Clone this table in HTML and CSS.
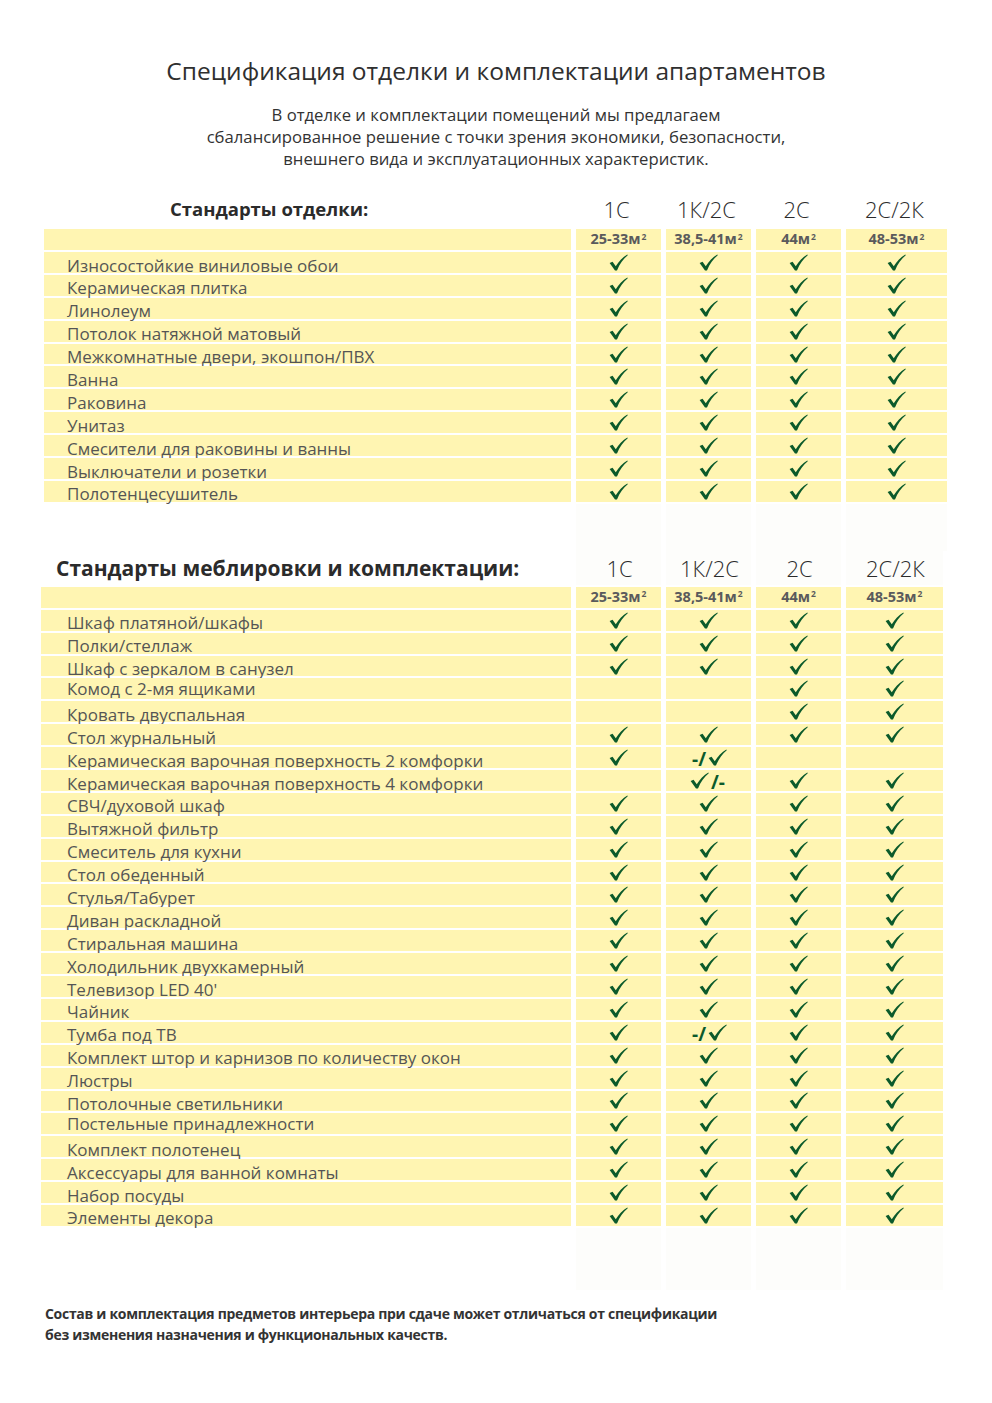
FILE: index.html
```html
<!DOCTYPE html>
<html lang="ru">
<head>
<meta charset="utf-8">
<title>Спецификация отделки и комплектации апартаментов</title>
<link rel="stylesheet" href="styles.css">
</head>
<body>
<svg class="defs" width="0" height="0" aria-hidden="true">
  <defs>
    <symbol id="ck" viewBox="0 0 20 18">
      <path d="M0.6 9.6 L3.7 8.1 L7.1 12.9 C10.4 7.4 14.4 3.1 19.4 0.4 L19.8 1.2 C15.1 4.9 11.2 10.4 8.4 17.4 L6.3 17.4 Z"/>
    </symbol>
  </defs>
</svg>
<main class="page">
  <h1 class="title">Спецификация отделки и комплектации апартаментов</h1>
  <p class="lead">В отделке и комплектации помещений мы предлагаем<br>сбалансированное решение с точки зрения экономики, безопасности,<br>внешнего вида и эксплуатационных характеристик.</p>

  <section class="spec spec-1">
    <div class="head-label h1l">Стандарты отделки:</div>
    <div class="head-col">1С</div>
    <div class="head-col">1К/2С</div>
    <div class="head-col">2С</div>
    <div class="head-col">2С/2К</div>

    <div class="cell label"></div>
    <div class="cell area">25-33м<sup>2</sup></div>
    <div class="cell area">38,5-41м<sup>2</sup></div>
    <div class="cell area">44м<sup>2</sup></div>
    <div class="cell area">48-53м<sup>2</sup></div>

    <div class="cell label">Износостойкие виниловые обои</div><div class="cell c"><svg class="chk"><use href="#ck"/></svg></div><div class="cell c"><svg class="chk"><use href="#ck"/></svg></div><div class="cell c"><svg class="chk"><use href="#ck"/></svg></div><div class="cell c"><svg class="chk"><use href="#ck"/></svg></div>
    <div class="cell label">Керамическая плитка</div><div class="cell c"><svg class="chk"><use href="#ck"/></svg></div><div class="cell c"><svg class="chk"><use href="#ck"/></svg></div><div class="cell c"><svg class="chk"><use href="#ck"/></svg></div><div class="cell c"><svg class="chk"><use href="#ck"/></svg></div>
    <div class="cell label">Линолеум</div><div class="cell c"><svg class="chk"><use href="#ck"/></svg></div><div class="cell c"><svg class="chk"><use href="#ck"/></svg></div><div class="cell c"><svg class="chk"><use href="#ck"/></svg></div><div class="cell c"><svg class="chk"><use href="#ck"/></svg></div>
    <div class="cell label">Потолок натяжной матовый</div><div class="cell c"><svg class="chk"><use href="#ck"/></svg></div><div class="cell c"><svg class="chk"><use href="#ck"/></svg></div><div class="cell c"><svg class="chk"><use href="#ck"/></svg></div><div class="cell c"><svg class="chk"><use href="#ck"/></svg></div>
    <div class="cell label">Межкомнатные двери, экошпон/ПВХ</div><div class="cell c"><svg class="chk"><use href="#ck"/></svg></div><div class="cell c"><svg class="chk"><use href="#ck"/></svg></div><div class="cell c"><svg class="chk"><use href="#ck"/></svg></div><div class="cell c"><svg class="chk"><use href="#ck"/></svg></div>
    <div class="cell label">Ванна</div><div class="cell c"><svg class="chk"><use href="#ck"/></svg></div><div class="cell c"><svg class="chk"><use href="#ck"/></svg></div><div class="cell c"><svg class="chk"><use href="#ck"/></svg></div><div class="cell c"><svg class="chk"><use href="#ck"/></svg></div>
    <div class="cell label">Раковина</div><div class="cell c"><svg class="chk"><use href="#ck"/></svg></div><div class="cell c"><svg class="chk"><use href="#ck"/></svg></div><div class="cell c"><svg class="chk"><use href="#ck"/></svg></div><div class="cell c"><svg class="chk"><use href="#ck"/></svg></div>
    <div class="cell label">Унитаз</div><div class="cell c"><svg class="chk"><use href="#ck"/></svg></div><div class="cell c"><svg class="chk"><use href="#ck"/></svg></div><div class="cell c"><svg class="chk"><use href="#ck"/></svg></div><div class="cell c"><svg class="chk"><use href="#ck"/></svg></div>
    <div class="cell label">Смесители для раковины и ванны</div><div class="cell c"><svg class="chk"><use href="#ck"/></svg></div><div class="cell c"><svg class="chk"><use href="#ck"/></svg></div><div class="cell c"><svg class="chk"><use href="#ck"/></svg></div><div class="cell c"><svg class="chk"><use href="#ck"/></svg></div>
    <div class="cell label">Выключатели и розетки</div><div class="cell c"><svg class="chk"><use href="#ck"/></svg></div><div class="cell c"><svg class="chk"><use href="#ck"/></svg></div><div class="cell c"><svg class="chk"><use href="#ck"/></svg></div><div class="cell c"><svg class="chk"><use href="#ck"/></svg></div>
    <div class="cell label">Полотенцесушитель</div><div class="cell c"><svg class="chk"><use href="#ck"/></svg></div><div class="cell c"><svg class="chk"><use href="#ck"/></svg></div><div class="cell c"><svg class="chk"><use href="#ck"/></svg></div><div class="cell c"><svg class="chk"><use href="#ck"/></svg></div>

    <div class="gap-cell"></div><div class="gap-cell faint"></div><div class="gap-cell faint"></div><div class="gap-cell faint"></div><div class="gap-cell faint"></div>
  </section>

  <section class="spec spec-2">
    <div class="head-label h2l">Стандарты меблировки и комплектации:</div>
    <div class="head-col faint">1С</div>
    <div class="head-col faint">1К/2С</div>
    <div class="head-col faint">2С</div>
    <div class="head-col faint">2С/2К</div>

    <div class="cell label"></div>
    <div class="cell area">25-33м<sup>2</sup></div>
    <div class="cell area">38,5-41м<sup>2</sup></div>
    <div class="cell area">44м<sup>2</sup></div>
    <div class="cell area">48-53м<sup>2</sup></div>

    <div class="cell label">Шкаф платяной/шкафы</div><div class="cell c"><svg class="chk"><use href="#ck"/></svg></div><div class="cell c"><svg class="chk"><use href="#ck"/></svg></div><div class="cell c"><svg class="chk"><use href="#ck"/></svg></div><div class="cell c"><svg class="chk"><use href="#ck"/></svg></div>
    <div class="cell label">Полки/стеллаж</div><div class="cell c"><svg class="chk"><use href="#ck"/></svg></div><div class="cell c"><svg class="chk"><use href="#ck"/></svg></div><div class="cell c"><svg class="chk"><use href="#ck"/></svg></div><div class="cell c"><svg class="chk"><use href="#ck"/></svg></div>
    <div class="cell label">Шкаф с зеркалом в санузел</div><div class="cell c"><svg class="chk"><use href="#ck"/></svg></div><div class="cell c"><svg class="chk"><use href="#ck"/></svg></div><div class="cell c"><svg class="chk"><use href="#ck"/></svg></div><div class="cell c"><svg class="chk"><use href="#ck"/></svg></div>
    <div class="cell label up">Комод с 2-мя ящиками</div><div class="cell c"></div><div class="cell c"></div><div class="cell c"><svg class="chk"><use href="#ck"/></svg></div><div class="cell c"><svg class="chk"><use href="#ck"/></svg></div>
    <div class="cell label">Кровать двуспальная</div><div class="cell c"></div><div class="cell c"></div><div class="cell c"><svg class="chk"><use href="#ck"/></svg></div><div class="cell c"><svg class="chk"><use href="#ck"/></svg></div>
    <div class="cell label">Стол журнальный</div><div class="cell c"><svg class="chk"><use href="#ck"/></svg></div><div class="cell c"><svg class="chk"><use href="#ck"/></svg></div><div class="cell c"><svg class="chk"><use href="#ck"/></svg></div><div class="cell c"><svg class="chk"><use href="#ck"/></svg></div>
    <div class="cell label">Керамическая варочная поверхность 2 комфорки</div><div class="cell c"><svg class="chk"><use href="#ck"/></svg></div><div class="cell c"><span class="mix">-/</span><svg class="chk"><use href="#ck"/></svg></div><div class="cell c"></div><div class="cell c"></div>
    <div class="cell label">Керамическая варочная поверхность 4 комфорки</div><div class="cell c"></div><div class="cell c"><svg class="chk"><use href="#ck"/></svg><span class="mix">/-</span></div><div class="cell c"><svg class="chk"><use href="#ck"/></svg></div><div class="cell c"><svg class="chk"><use href="#ck"/></svg></div>
    <div class="cell label">СВЧ/духовой шкаф</div><div class="cell c"><svg class="chk"><use href="#ck"/></svg></div><div class="cell c"><svg class="chk"><use href="#ck"/></svg></div><div class="cell c"><svg class="chk"><use href="#ck"/></svg></div><div class="cell c"><svg class="chk"><use href="#ck"/></svg></div>
    <div class="cell label">Вытяжной фильтр</div><div class="cell c"><svg class="chk"><use href="#ck"/></svg></div><div class="cell c"><svg class="chk"><use href="#ck"/></svg></div><div class="cell c"><svg class="chk"><use href="#ck"/></svg></div><div class="cell c"><svg class="chk"><use href="#ck"/></svg></div>
    <div class="cell label">Смеситель для кухни</div><div class="cell c"><svg class="chk"><use href="#ck"/></svg></div><div class="cell c"><svg class="chk"><use href="#ck"/></svg></div><div class="cell c"><svg class="chk"><use href="#ck"/></svg></div><div class="cell c"><svg class="chk"><use href="#ck"/></svg></div>
    <div class="cell label">Стол обеденный</div><div class="cell c"><svg class="chk"><use href="#ck"/></svg></div><div class="cell c"><svg class="chk"><use href="#ck"/></svg></div><div class="cell c"><svg class="chk"><use href="#ck"/></svg></div><div class="cell c"><svg class="chk"><use href="#ck"/></svg></div>
    <div class="cell label">Стулья/Табурет</div><div class="cell c"><svg class="chk"><use href="#ck"/></svg></div><div class="cell c"><svg class="chk"><use href="#ck"/></svg></div><div class="cell c"><svg class="chk"><use href="#ck"/></svg></div><div class="cell c"><svg class="chk"><use href="#ck"/></svg></div>
    <div class="cell label">Диван раскладной</div><div class="cell c"><svg class="chk"><use href="#ck"/></svg></div><div class="cell c"><svg class="chk"><use href="#ck"/></svg></div><div class="cell c"><svg class="chk"><use href="#ck"/></svg></div><div class="cell c"><svg class="chk"><use href="#ck"/></svg></div>
    <div class="cell label">Стиральная машина</div><div class="cell c"><svg class="chk"><use href="#ck"/></svg></div><div class="cell c"><svg class="chk"><use href="#ck"/></svg></div><div class="cell c"><svg class="chk"><use href="#ck"/></svg></div><div class="cell c"><svg class="chk"><use href="#ck"/></svg></div>
    <div class="cell label">Холодильник двухкамерный</div><div class="cell c"><svg class="chk"><use href="#ck"/></svg></div><div class="cell c"><svg class="chk"><use href="#ck"/></svg></div><div class="cell c"><svg class="chk"><use href="#ck"/></svg></div><div class="cell c"><svg class="chk"><use href="#ck"/></svg></div>
    <div class="cell label">Телевизор LED 40'</div><div class="cell c"><svg class="chk"><use href="#ck"/></svg></div><div class="cell c"><svg class="chk"><use href="#ck"/></svg></div><div class="cell c"><svg class="chk"><use href="#ck"/></svg></div><div class="cell c"><svg class="chk"><use href="#ck"/></svg></div>
    <div class="cell label">Чайник</div><div class="cell c"><svg class="chk"><use href="#ck"/></svg></div><div class="cell c"><svg class="chk"><use href="#ck"/></svg></div><div class="cell c"><svg class="chk"><use href="#ck"/></svg></div><div class="cell c"><svg class="chk"><use href="#ck"/></svg></div>
    <div class="cell label">Тумба под ТВ</div><div class="cell c"><svg class="chk"><use href="#ck"/></svg></div><div class="cell c"><span class="mix">-/</span><svg class="chk"><use href="#ck"/></svg></div><div class="cell c"><svg class="chk"><use href="#ck"/></svg></div><div class="cell c"><svg class="chk"><use href="#ck"/></svg></div>
    <div class="cell label">Комплект штор и карнизов по количеству окон</div><div class="cell c"><svg class="chk"><use href="#ck"/></svg></div><div class="cell c"><svg class="chk"><use href="#ck"/></svg></div><div class="cell c"><svg class="chk"><use href="#ck"/></svg></div><div class="cell c"><svg class="chk"><use href="#ck"/></svg></div>
    <div class="cell label">Люстры</div><div class="cell c"><svg class="chk"><use href="#ck"/></svg></div><div class="cell c"><svg class="chk"><use href="#ck"/></svg></div><div class="cell c"><svg class="chk"><use href="#ck"/></svg></div><div class="cell c"><svg class="chk"><use href="#ck"/></svg></div>
    <div class="cell label">Потолочные светильники</div><div class="cell c"><svg class="chk"><use href="#ck"/></svg></div><div class="cell c"><svg class="chk"><use href="#ck"/></svg></div><div class="cell c"><svg class="chk"><use href="#ck"/></svg></div><div class="cell c"><svg class="chk"><use href="#ck"/></svg></div>
    <div class="cell label up">Постельные принадлежности</div><div class="cell c"><svg class="chk"><use href="#ck"/></svg></div><div class="cell c"><svg class="chk"><use href="#ck"/></svg></div><div class="cell c"><svg class="chk"><use href="#ck"/></svg></div><div class="cell c"><svg class="chk"><use href="#ck"/></svg></div>
    <div class="cell label">Комплект полотенец</div><div class="cell c"><svg class="chk"><use href="#ck"/></svg></div><div class="cell c"><svg class="chk"><use href="#ck"/></svg></div><div class="cell c"><svg class="chk"><use href="#ck"/></svg></div><div class="cell c"><svg class="chk"><use href="#ck"/></svg></div>
    <div class="cell label">Аксессуары для ванной комнаты</div><div class="cell c"><svg class="chk"><use href="#ck"/></svg></div><div class="cell c"><svg class="chk"><use href="#ck"/></svg></div><div class="cell c"><svg class="chk"><use href="#ck"/></svg></div><div class="cell c"><svg class="chk"><use href="#ck"/></svg></div>
    <div class="cell label">Набор посуды</div><div class="cell c"><svg class="chk"><use href="#ck"/></svg></div><div class="cell c"><svg class="chk"><use href="#ck"/></svg></div><div class="cell c"><svg class="chk"><use href="#ck"/></svg></div><div class="cell c"><svg class="chk"><use href="#ck"/></svg></div>
    <div class="cell label">Элементы декора</div><div class="cell c"><svg class="chk"><use href="#ck"/></svg></div><div class="cell c"><svg class="chk"><use href="#ck"/></svg></div><div class="cell c"><svg class="chk"><use href="#ck"/></svg></div><div class="cell c"><svg class="chk"><use href="#ck"/></svg></div>

    <div class="tail-cell"></div><div class="tail-cell faint"></div><div class="tail-cell faint"></div><div class="tail-cell faint"></div><div class="tail-cell faint"></div>
  </section>

  <p class="note">Состав и комплектация предметов интерьера при сдаче может отличаться от спецификации<br>без изменения назначения и функциональных качеств.</p>
</main>
</body>
</html>
```

FILE: styles.css
```css
* { box-sizing: border-box; }

html, body {
  margin: 0;
  padding: 0;
  background: #ffffff;
}

body {
  font-family: "Open Sans", "Noto Sans", "Liberation Sans", sans-serif;
  color: #333333;
}

.defs {
  position: absolute;
  width: 0;
  height: 0;
  overflow: hidden;
}

.page {
  width: 992px;
  padding-top: 54px;
}

.title {
  margin: 0;
  text-align: center;
  font-size: 24.5px;
  font-weight: 400;
  line-height: 34px;
  color: #2f2f2f;
}

.lead {
  margin: 16px 0 0;
  text-align: center;
  font-size: 16.7px;
  line-height: 22px;
  color: #333333;
}

.spec {
  display: grid;
  column-gap: 5px;
  row-gap: 2px;
}

.spec-1 {
  margin: 25px 0 0 44px;
  grid-template-columns: 527px 85px 85px 85px 101px;
  grid-template-rows: 32px 21px repeat(11, 20.9px) 47px;
}

.spec-2 {
  margin: 0 0 0 41px;
  grid-template-columns: 530px 85px 85px 85px 97px;
  grid-template-rows: 34px 21px repeat(27, 20.9px) 62px;
}

.head-label {
  font-size: 18.5px;
  font-weight: 700;
  line-height: 28px;
  color: #2b2b2b;
  white-space: nowrap;
}

.h1l { padding-left: 126px; }
.h2l { padding-left: 15px; font-size: 21px; line-height: 34px; }

.head-col {
  text-align: center;
  font-size: 22px;
  font-weight: 300;
  line-height: 28px;
  color: #2b2b2b;
}

.spec-1 .head-col { padding-right: 4px; }
.spec-2 .head-col { line-height: 34px; padding-left: 2px; }

.faint { background: #fdfdfb; }

.cell {
  background: #fff5b2;
}

.label {
  font-size: 17px;
  line-height: 19px;
  padding: 3.5px 0 0 23px;
  color: #555555;
  white-space: nowrap;
  overflow: visible;
}

.spec-2 .label { padding-left: 26px; }

.label.up { padding-top: 1px; }

.area {
  display: flex;
  align-items: center;
  justify-content: center;
  font-size: 14.5px;
  font-weight: 700;
  color: #5a5a5c;
  line-height: 1;
}

.area sup {
  font-size: 8.5px;
  position: relative;
  top: -3px;
  vertical-align: super;
  line-height: 0;
  margin-left: 1px;
}

.c {
  display: flex;
  align-items: center;
  justify-content: center;
  color: #0b5a2b;
}

.chk {
  width: 19px;
  height: 17px;
  fill: #0b5a2b;
  overflow: visible;
}

.mix {
  font-size: 19px;
  font-weight: 700;
  line-height: 1;
  color: #0b5a2b;
  margin: 4px 2px 0;
}

.note {
  margin: 13px 0 0 45px;
  font-size: 14px;
  font-weight: 700;
  line-height: 21px;
  color: #333333;
  letter-spacing: -0.3px;
}
```
